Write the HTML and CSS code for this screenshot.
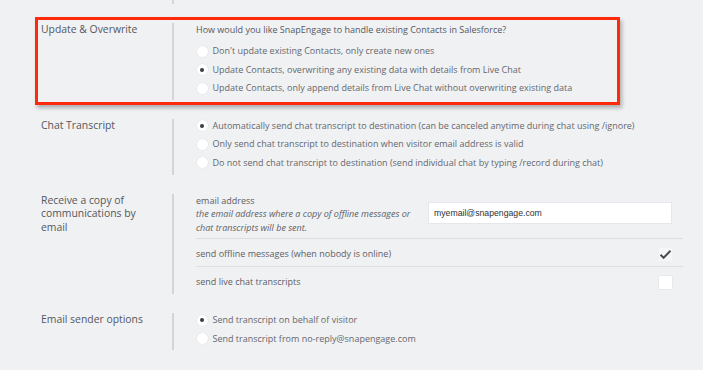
FILE: index.html
```html
<!DOCTYPE html>
<html>
<head>
<meta charset="utf-8">
<link rel="stylesheet" href="styles.css">
</head>
<body>
<div class="page">
  <div class="section stub">
    <div class="label"></div>
    <div class="content"></div>
  </div>

  <div class="section">
    <div class="label">Update &amp; Overwrite</div>
    <div class="content">
      <div class="question">How would you like SnapEngage to handle existing Contacts in Salesforce?</div>
      <div class="opt"><span class="radio"></span>Don't update existing Contacts, only create new ones</div>
      <div class="opt"><span class="radio on"></span>Update Contacts, overwriting any existing data with details from Live Chat</div>
      <div class="opt"><span class="radio"></span>Update Contacts, only append details from Live Chat without overwriting existing data</div>
    </div>
  </div>

  <div class="section">
    <div class="label">Chat Transcript</div>
    <div class="content">
      <div class="opt"><span class="radio on"></span>Automatically send chat transcript to destination (can be canceled anytime during chat using /ignore)</div>
      <div class="opt"><span class="radio"></span>Only send chat transcript to destination when visitor email address is valid</div>
      <div class="opt"><span class="radio"></span>Do not send chat transcript to destination (send individual chat by typing /record during chat)</div>
    </div>
  </div>

  <div class="section">
    <div class="label">Receive a copy of communications by email</div>
    <div class="content">
      <div class="row email-row">
        <div class="email-text">
          <div>email address</div>
          <div class="hint">the email address where a copy of offline messages or<br>chat transcripts will be sent.</div>
        </div>
        <div class="input">myemail@snapengage.com</div>
      </div>
      <div class="row check-row">
        <span>send offline messages (when nobody is online)</span>
        <span class="checkbox checked"><svg width="13" height="11" viewBox="0 0 13 11"><path d="M1.5 5.8 L4.6 8.8 L11.5 1.8" fill="none" stroke="#4a4d52" stroke-width="2"/></svg></span>
      </div>
      <div class="row check-row last">
        <span>send live chat transcripts</span>
        <span class="checkbox"></span>
      </div>
    </div>
  </div>

  <div class="section">
    <div class="label">Email sender options</div>
    <div class="content">
      <div class="opt"><span class="radio on"></span>Send transcript on behalf of visitor</div>
      <div class="opt"><span class="radio"></span>Send transcript from no-reply@snapengage.com</div>
    </div>
  </div>

  <div class="highlight"></div>
</div>
</body>
</html>
```

FILE: styles.css
```css
html, body {
  margin: 0;
  padding: 0;
  background: #f0f1f3;
}
body {
  font-family: "Open Sans", "DejaVu Sans", sans-serif;
  color: #5d6066;
}
.page {
  position: relative;
  width: 703px;
  height: 370px;
  overflow: hidden;
  display: flex;
  flex-direction: column;
  gap: 19px;
}
.section {
  display: grid;
  grid-template-columns: 172px 1fr;
}
.stub {
  margin-top: -10px;
  height: 14px;
}
.label {
  padding-left: 41px;
  width: 120px;
  font-size: 10.4px;
  line-height: 13.5px;
  color: #54575c;
}
.content {
  border-left: 2px solid #d3d5d8;
  padding-left: 22px;
  margin-right: 20px;
  font-size: 9px;
}
.question {
  line-height: 14px;
  margin-bottom: 7px;
  color: #55585d;
}
.opt {
  height: 14px;
  line-height: 14px;
  margin-bottom: 4.6px;
  display: flex;
  align-items: center;
  color: #65686d;
  white-space: nowrap;
}
.radio {
  width: 11px;
  height: 11px;
  border-radius: 50%;
  background: #ffffff;
  box-shadow: 0 0 0 0.6px #e2e3e6;
  margin-left: 0.5px;
  margin-right: 5px;
  display: flex;
  align-items: center;
  justify-content: center;
  flex: none;
}
.radio.on::after {
  content: "";
  width: 4px;
  height: 4px;
  border-radius: 50%;
  background: #3a3c40;
}
.row {
  display: flex;
  padding-right: 11px;
  border-bottom: 1px solid #dcdee1;
  color: #5d6066;
}
.email-row {
  padding-bottom: 4px;
  justify-content: space-between;
  align-items: flex-start;
}
.email-text {
  line-height: 13.5px;
}
.hint {
  font-style: italic;
}
.input {
  margin-top: 8px;
  width: 244px;
  height: 22px;
  padding-left: 5px;
  background: #ffffff;
  border: 1px solid #e6e7ea;
  box-sizing: border-box;
  font-family: "Liberation Sans", Arial, sans-serif;
  font-size: 8.7px;
  line-height: 20px;
  color: #2e3033;
}
.check-row {
  padding-top: 8px;
  padding-bottom: 5px;
  height: 14px;
  line-height: 14px;
  justify-content: space-between;
  align-items: center;
}
.check-row.last {
  border-bottom: none;
}
.checkbox {
  width: 13px;
  height: 13px;
  background: #ffffff;
  box-shadow: 0 0 0 0.6px #e2e3e6;
  display: flex;
  align-items: center;
  justify-content: center;
}
.checkbox.checked {
  background: #f7f7f8;
  box-shadow: none;
}
.highlight {
  position: absolute;
  left: 35px;
  top: 17px;
  width: 585px;
  height: 88px;
  box-sizing: border-box;
  border: 3px solid #ff2a0c;
  box-shadow: 2px 3px 4px rgba(0, 0, 0, 0.28);
}
```
